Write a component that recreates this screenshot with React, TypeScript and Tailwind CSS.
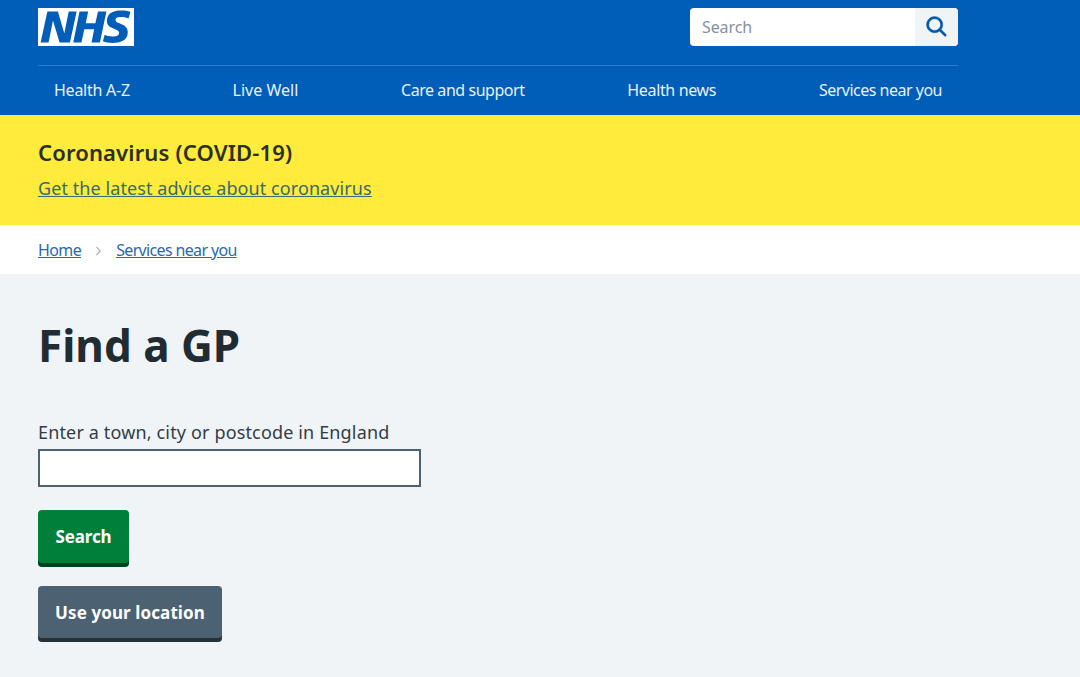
import React from "react";

const font = "font-['Noto_Sans','Open_Sans',sans-serif]";

function Logo() {
  return (
    <svg viewBox="0 0 40 16" className="block w-[96px] h-[38px]" preserveAspectRatio="none">
      <path fill="#fff" d="M0 0h40v16H0z" />
      <path
        fill="#005eb8"
        d="M3.9 1.5h4.4l2.6 9h.1l1.8-9h3.3l-2.8 13H9l-2.7-9h-.1l-1.8 9H1.1M17.3 1.5h3.6l-1 4.9h4L25 1.5h3.5l-2.7 13h-3.5l1.1-5.6h-4.1l-1.2 5.6h-3.4M37.7 4.4c-.7-.3-1.6-.6-2.9-.6-1.4 0-2.5.2-2.5 1.3 0 1.8 5.1 1.2 5.1 5.1 0 3.6-3.3 4.5-6.4 4.5-1.3 0-2.9-.3-4-.7l.8-2.7c.7.4 2.1.7 3.2.7s2.8-.2 2.8-1.5c0-2.1-5.1-1.3-5.1-5 0-3.4 2.9-4.4 5.8-4.4 1.6 0 3.1.2 4 .6"
      />
    </svg>
  );
}

export default function App() {
  const nav = [
    { label: "Health A-Z", cls: "tracking-[-0.25px]" },
    { label: "Live Well", cls: "tracking-[0px]" },
    { label: "Care and support", cls: "tracking-[-0.45px]" },
    { label: "Health news", cls: "tracking-[-0.35px]" },
    { label: "Services near you", cls: "tracking-[-0.5px]" },
  ];
  return (
    <div className={`${font} h-[677px] overflow-hidden bg-[#f0f4f7] text-[#212b32]`}>
      <header className="bg-[#005eb8] h-[115px] px-[38px] pt-2">
        <div className="w-[920px]">
          <div className="flex items-start justify-between h-[57px]">
            <Logo />
            <div className="flex w-[268px] h-[38px] rounded overflow-hidden bg-white">
              <div className="flex-1 pl-3 text-[16px] leading-[38px] tracking-[-0.1px] text-[#85929c]">Search</div>
              <div className="w-[43px] bg-[#f0f4f5] flex items-center justify-center pl-px">
                <svg viewBox="0 0 24 24" className="w-[28px] h-[28px]" fill="#005aad" stroke="#005aad" strokeWidth="0.3">
                  <path d="M19.71 18.29l-4.11-4.1a7 7 0 1 0-1.41 1.41l4.1 4.11a1 1 0 0 0 1.42 0 1 1 0 0 0 0-1.42zM5 10a5 5 0 1 1 5 5 5 5 0 0 1-5-5z" />
                </svg>
              </div>
            </div>
          </div>
          <nav className="border-t border-[#2a7fd0] h-[48px] px-4 flex items-center justify-between text-[16px] text-[#e8f1fa]">
            {nav.map((n) => (
              <span key={n.label} className={n.cls}>{n.label}</span>
            ))}
          </nav>
        </div>
      </header>

      <section className="bg-[#ffeb3b] h-[110px] px-[38px] pt-[21px]">
        <h2 className="text-[22px] leading-[32px] font-semibold tracking-[0.15px] text-[#2a2f20]">Coronavirus (COVID-19)</h2>
        <a className="block mt-[7px] text-[18px] leading-[26px] underline tracking-[0.08px] text-[#3c6a6c]">Get the latest advice about coronavirus</a>
      </section>

      <div className="bg-white h-[49px] px-[38px] flex items-center text-[16px] text-[#2a69ad]">
        <a className="underline tracking-[-0.6px]">Home</a>
        <svg viewBox="0 0 8 12" className="w-[7px] h-[10px] mx-[14px] mt-[2px]" fill="none" stroke="#aeb7bd" strokeWidth="1.6">
          <path d="M1.5 1l4.5 5-4.5 5" />
        </svg>
        <a className="underline tracking-[-0.65px]">Services near you</a>
      </div>

      <main className="px-[38px] pt-[38px]">
        <h1 className="text-[44px] leading-[66px] font-bold text-[#212b32] tracking-[0px]">Find a GP</h1>
        <label className="block mt-[41px] text-[18px] leading-[26px] tracking-[0.15px] text-[#333d45]">Enter a town, city or postcode in England</label>
        <div className="mt-[4px] w-[383px] h-[38px] bg-white border-2 border-[#4c6272]" />
        <div className="mt-[23px] flex flex-col items-start gap-[23px]">
          <button className="w-[91px] h-[53px] rounded bg-[#007f3b] shadow-[0_4px_0_#00401e] text-white text-[17px] font-bold tracking-[-0.15px] text-center">Search</button>
          <button className="w-[184px] h-[52px] pt-px rounded bg-[#4c6272] shadow-[0_4px_0_#263139] text-white text-[17px] font-bold tracking-[0.1px] text-center">Use your location</button>
        </div>
      </main>
    </div>
  );
}
